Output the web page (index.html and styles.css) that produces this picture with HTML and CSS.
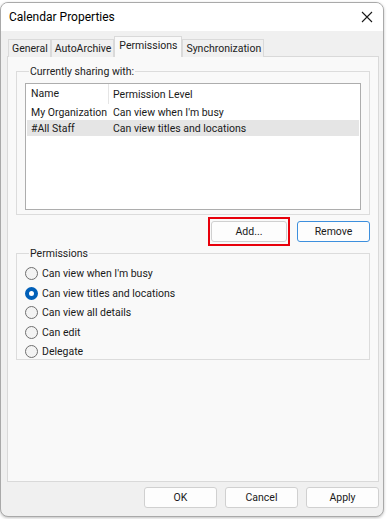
FILE: index.html
```html
<!DOCTYPE html>
<html lang="en">
<head>
<meta charset="UTF-8">
<title>Calendar Properties</title>
<link rel="stylesheet" href="styles.css">
</head>
<body>
<div class="dialog">
  <div class="titlebar">
    <span class="title">Calendar Properties</span>
    <svg class="close" width="12" height="12" viewBox="0 0 12 12">
      <path d="M1 1 L11 11 M11 1 L1 11" stroke="#1a1a1a" stroke-width="1.1" fill="none"/>
    </svg>
  </div>

  <div class="content">
    <div class="tabs">
      <div class="tab">General</div>
      <div class="tab">AutoArchive</div>
      <div class="tab active">Permissions</div>
      <div class="tab">Synchronization</div>
    </div>

    <div class="panel">
      <fieldset class="group sharing">
        <legend>Currently sharing with:</legend>
        <div class="listview">
          <div class="row header">
            <span class="col-name">Name</span>
            <span class="col-level">Permission Level</span>
          </div>
          <div class="row">
            <span class="col-name">My Organization</span>
            <span class="col-level">Can view when I'm busy</span>
          </div>
          <div class="row selected">
            <span class="col-name">#All Staff</span>
            <span class="col-level">Can view titles and locations</span>
          </div>
        </div>
      </fieldset>

      <div class="list-actions">
        <div class="highlight">
          <button class="btn add">Add...</button>
        </div>
        <button class="btn remove">Remove</button>
      </div>

      <fieldset class="group perms">
        <legend>Permissions</legend>
        <label class="radio"><span class="dot"></span>Can view when I'm busy</label>
        <label class="radio"><span class="dot checked"></span>Can view titles and locations</label>
        <label class="radio"><span class="dot"></span>Can view all details</label>
        <label class="radio"><span class="dot"></span>Can edit</label>
        <label class="radio"><span class="dot"></span>Delegate</label>
      </fieldset>
    </div>

    <div class="footer">
      <button class="btn">OK</button>
      <button class="btn">Cancel</button>
      <button class="btn">Apply</button>
    </div>
  </div>
</div>
</body>
</html>
```

FILE: styles.css
```css
* {
  box-sizing: border-box;
  font-family: Roboto, "Noto Sans", sans-serif;
}

body {
  margin: 0;
  background-color: #ffffff;
  height: 519px;
  overflow: hidden;
}

.dialog {
  margin-top: 2px;
  width: 384px;
  height: 515px;
  border: 1px solid #a9a9a9;
  border-radius: 8px;
  overflow: hidden;
  background-color: #f0f0f0;
  box-shadow: rgba(0, 0, 0, 0.25) 0px 1px 3px;
  display: flex;
  flex-direction: column;
}

.titlebar {
  height: 28px;
  background-color: #ffffff;
  display: flex;
  align-items: center;
  justify-content: space-between;
  padding: 0 10px 0 8px;
}

.title {
  font-size: 12px;
  color: #000;
}

.content {
  flex: 1;
  display: flex;
  flex-direction: column;
  padding: 6px 0 0 6px;
}

.tabs {
  display: flex;
  align-items: flex-end;
  height: 20px;
  padding-left: 1px;
  position: relative;
  z-index: 1;
}

.tab {
  font-size: 10.5px;
  color: #222;
  height: 18px;
  padding: 0 2px 0 3px;
  line-height: 17px;
  border: 1px solid #dadada;
  border-bottom: none;
  background-color: #f0f0f0;
}

.tab.active {
  height: 21px;
  line-height: 18px;
  background-color: #f9f9f9;
  border-color: #d9d9d9;
  padding: 0 4px;
}

.panel {
  height: 426px;
  margin-top: -1px;
  background-color: #f9f9f9;
  border: 1px solid #d9d9d9;
  width: 372px;
  padding: 8px 8px 0 8px;
}

.group {
  margin: 0;
  border: 1px solid #dcdcdc;
  padding: 0;
}

.group legend {
  font-size: 10.5px;
  color: #222;
  padding: 0 1px;
  margin-left: 4px;
  line-height: 13px;
}

.sharing {
  padding: 5px 8px 3px 8px;
  height: 150px;
}

.listview {
  background-color: #fff;
  border: 1px solid #adadad;
  height: 127px;
  padding: 0 1px;
}

.row {
  display: flex;
  height: 16px;
  align-items: center;
  font-size: 10.5px;
  color: #1a1a1a;
}

.row.header {
  height: 20px;
}

.row.selected {
  background-color: #e5e5e5;
}

.col-name {
  width: 82px;
  padding-left: 4px;
  white-space: nowrap;
}

.row.header .col-name {
  border-right: 1px solid #e5e5e5;
  height: 20px;
  line-height: 20px;
}

.col-level {
  padding-left: 4px;
}

.list-actions {
  display: flex;
  justify-content: flex-end;
  align-items: center;
  gap: 7px;
  margin: 2px 0 1px 0;
}

.btn {
  font-size: 10.5px;
  color: #1a1a1a;
  width: 73px;
  height: 21px;
  background-color: #fdfdfd;
  border: 1px solid #d0d0d0;
  border-radius: 3px;
  padding: 0;
}

.highlight {
  border: 2px solid #e8000b;
  padding: 1px 1px 2px 1px;
}

.add {
  width: 76px;
}

.remove {
  border-color: #3d8fdd;
}

.perms {
  padding: 4px 8px 4px 8px;
  height: 113px;
}

.radio {
  display: flex;
  align-items: center;
  gap: 4px;
  height: 19.5px;
  font-size: 10.5px;
  color: #1a1a1a;
}

.dot {
  width: 13px;
  height: 13px;
  border-radius: 50%;
  border: 1px solid #6f6f6f;
  background-color: #f3f3f3;
}

.dot.checked {
  border: 4px solid #005fb8;
  background-color: #fff;
}

.footer {
  display: flex;
  justify-content: flex-end;
  gap: 8px;
  padding: 5px 4px 0 0;
}
```
